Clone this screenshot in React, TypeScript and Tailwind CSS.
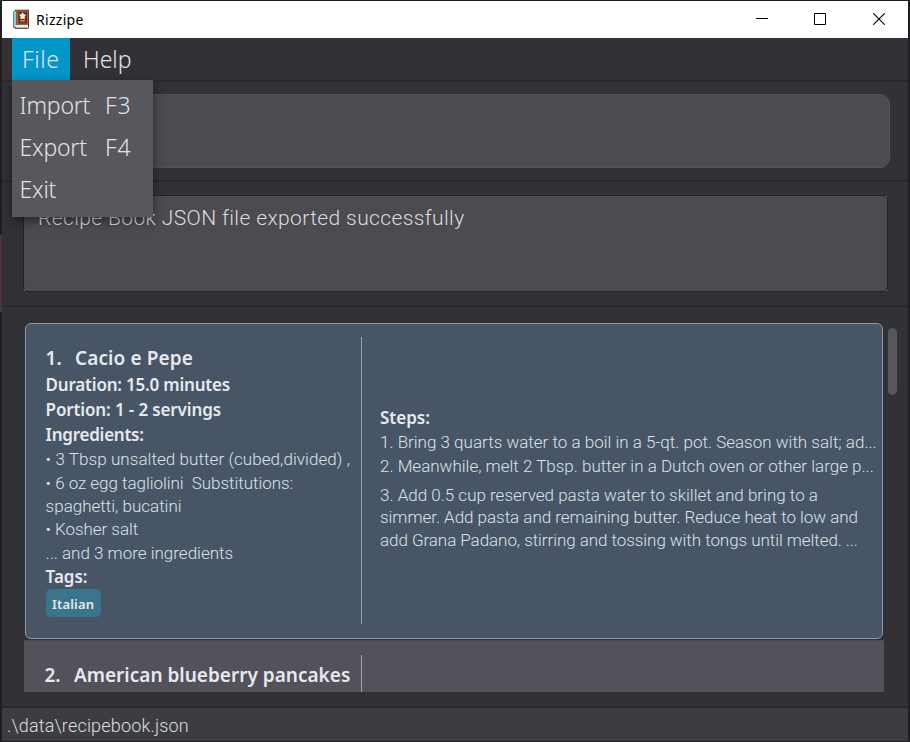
import type { ReactNode } from "react";

const label = "font-['Noto_Sans',sans-serif] font-semibold text-[#e6e9ee]";

function BookIcon() {
  return (
    <svg width="18" height="21" viewBox="0 0 18 21" className="shrink-0">
      <path d="M0.4 3 2.4 0.8H16V16.5L15.4 19.8H2.6L0.4 18.2Z" fill="#33201e" />
      <path d="M0.8 3.2 3.4 1V16.4L1 17.6Z" fill="#7fd0dc" />
      <path d="M3.6 1.3H15.4V16H3.6Z" fill="#b05f38" />
      <path d="M5.2 2.6H14V14.6H5.2Z" fill="#6b3023" />
      <path d="M1 17 3.6 16H15V18.8H2.8Z" fill="#dfeef2" />
      <path d="M9.6 3.2 10.9 5.2 13.2 5.7 11.6 7.4 12 9.8H7.2L7.6 7.4 6 5.7 8.3 5.2Z" fill="#fbf3ec" />
      <path d="M7.4 11H11.8V12.6H7.4Z" fill="#c98c66" />
    </svg>
  );
}

function Line({ className, children }: { className: string; children: ReactNode }) {
  return <div className={`flex items-center whitespace-pre ${className}`}>{children}</div>;
}

function TitleBar() {
  return (
    <div className="flex h-[37px] shrink-0 items-center bg-white pl-[11px] pr-[23px]">
      <BookIcon />
      <span className="ml-[5px] font-['Noto_Sans',sans-serif] text-[14px] tracking-[0.3px] text-black">Rizzipe</span>
      <div className="ml-auto flex items-center pb-px">
        <svg width="12" height="12" viewBox="0 0 12 12">
          <path d="M0 5.5H12" stroke="#000" />
        </svg>
        <svg width="12" height="12" viewBox="0 0 12 12" className="ml-[46px]">
          <path d="M0.5 0.5H11.5V11.5H0.5Z" fill="none" stroke="#000" />
        </svg>
        <svg width="12" height="12" viewBox="0 0 12 12" className="ml-[47px]">
          <path d="M0.2 0.2 11.8 11.8M11.8 0.2 0.2 11.8" stroke="#000" strokeWidth="1.1" />
        </svg>
      </div>
    </div>
  );
}

const fileItems = [
  { name: "Import", keys: "F3" },
  { name: "Export", keys: "F4" },
  { name: "Exit", keys: "" },
];

function MenuBar() {
  return (
    <div className="flex h-[42px] shrink-0 bg-[#323136] pl-[10px] font-['Noto_Sans',sans-serif] text-[23px] font-light text-[#e3e3e5]">
      <div className="relative flex w-[58px] items-center bg-[#0396c9] pl-[10px] tracking-[0.6px]">
        File
        <div className="absolute left-0 top-[42px] z-10 h-[137px] w-[140.5px] bg-[#57575e] pt-[4px] shadow-[0_4px_10px_rgba(0,0,0,0.45)]">
          {fileItems.map((item) => (
            <div key={item.name} className="flex h-[42px] items-center pl-[7.5px] pt-px">
              <span className="w-[85.5px] tracking-[-0.2px]">{item.name}</span>
              <span className="tracking-[0.8px]">{item.keys}</span>
            </div>
          ))}
        </div>
      </div>
      <div className="flex items-center pl-[13px]">Help</div>
    </div>
  );
}

const body = "text-[17px] font-light text-[#dde2e8]";

function SelectedRecipe() {
  return (
    <div className="ml-px mr-px flex h-[316px] shrink-0 rounded-[6px] border-[1.5px] border-[#8d99a6] bg-[#475567] pt-[13px]">
      <div className="h-[287px] w-[336px] shrink-0 border-r border-[#98a3af] pl-[19.6px] pt-[8px]">
        <Line className={`h-[27px] text-[19px] tracking-[0.1px] ${label}`}>
          <span className="w-[29.4px]">1.</span>Cacio e Pepe
        </Line>
        <Line className={`h-[25px] text-[17px] tracking-[-0.2px] ${label}`}>Duration: 15.0 minutes</Line>
        <Line className={`h-[25px] text-[17px] tracking-[-0.13px] ${label}`}>Portion: 1 - 2 servings</Line>
        <Line className={`h-[26px] text-[17px] tracking-[-0.24px] ${label}`}>Ingredients:</Line>
        <Line className={`h-[24px] tracking-[0.07px] ${body}`}>• 3 Tbsp unsalted butter (cubed,divided) ,</Line>
        <Line className={`h-[23px] tracking-[-0.04px] ${body}`}>• 6 oz egg tagliolini  Substitutions:</Line>
        <Line className={`h-[23px] ${body}`}>spaghetti, bucatini</Line>
        <Line className={`h-[24px] tracking-[-0.06px] ${body}`}>• Kosher salt</Line>
        <Line className={`h-[24px] ${body}`}>... and 3 more ingredients</Line>
        <Line className={`h-[23px] pb-[2px] text-[17px] ${label}`}>Tags:</Line>
        <div className={`flex h-[28px] w-[55px] items-center justify-center rounded-[5px] bg-[#3b758b] pt-[3px] text-[13px] tracking-[0.2px] ${label}`}>
          Italian
        </div>
      </div>
      <div className="flex h-[287px] min-w-0 flex-1 flex-col justify-center pb-[3px] pl-[18px]">
        <Line className={`h-[24px] pb-px text-[17px] ${label}`}>Steps:</Line>
        <Line className={`h-[24px] ${body}`}>1. Bring 3 quarts water to a boil in a 5-qt. pot. Season with salt; ad...</Line>
        <Line className={`h-[24px] ${body}`}>2. Meanwhile, melt 2 Tbsp. butter in a Dutch oven or other large p...</Line>
        <Line className={`mt-[6px] h-[22px] ${body}`}>3. Add 0.5 cup reserved pasta water to skillet and bring to a</Line>
        <Line className={`h-[23px] tracking-[-0.03px] ${body}`}>simmer. Add pasta and remaining butter. Reduce heat to low and</Line>
        <Line className={`h-[22px] tracking-[-0.06px] ${body}`}>add Grana Padano, stirring and tossing with tongs until melted. ...</Line>
      </div>
    </div>
  );
}

export default function App() {
  return (
    <div className="flex h-[742px] w-[910px] overflow-hidden bg-[#221d20] pb-px pr-[2px] pt-px font-[Roboto,sans-serif]">
      <div className="w-[2px] shrink-0 pt-[234px]">
        <div className="h-[77px] bg-[#4a3440]" />
      </div>
      <div className="flex h-[740px] min-w-0 flex-1 flex-col bg-[#323136]">
        <TitleBar />
        <MenuBar />

        <div className="h-[102px] shrink-0 border-y-2 border-[#29282c] pl-[21px] pr-[18px] pt-[12px]">
          <div className="h-[74px] rounded-[10px] border border-[#525256] bg-[#4b4b50]" />
        </div>

        <div className="h-[125px] shrink-0 border-b-2 border-[#29282c] pl-[21px] pr-[20px] pt-[13px]">
          <div className="h-[97px] bg-[linear-gradient(#9a9a9e,#9a9a9e)] bg-[length:863px_95px] bg-center bg-no-repeat">
            <div className="h-[97px] rounded-[5px] border border-[#242428] bg-[#4b4b50] pl-[14px] pt-[8px]">
              <div className="whitespace-pre text-[21px] font-light leading-[28px] tracking-[0.38px] text-[#dcdcde]">
                Recipe Book JSON file exported successfully
              </div>
            </div>
          </div>
        </div>

        <div className="flex h-[399px] shrink-0 items-start pl-[22px] pt-[16px]">
          <div className="flex h-[369px] w-[860px] flex-col overflow-hidden">
            <SelectedRecipe />
            <div className="mt-px h-[52px] border-t border-[#454a54] bg-[#53525b] pt-[14px]">
              <div className="h-[38px] w-[338px] border-r border-[#a2a2a8] pl-[20.5px] pt-[7px]">
                <Line className={`h-[26px] text-[19px] ${label}`}>
                  <span className="w-[29.5px]">2.</span>American blueberry pancakes
                </Line>
              </div>
            </div>
          </div>
          <div className="ml-[4px] mt-[5px] h-[67px] w-[9px] rounded-full bg-[#57575e]" />
        </div>

        <div className="flex flex-1 items-center border-t-2 border-[#29282c] bg-[#3c3d42] pl-[5px] pt-[2px] text-[18px] font-light tracking-[0.18px] text-[#dededf]">
          .\data\recipebook.json
        </div>
      </div>
    </div>
  );
}
